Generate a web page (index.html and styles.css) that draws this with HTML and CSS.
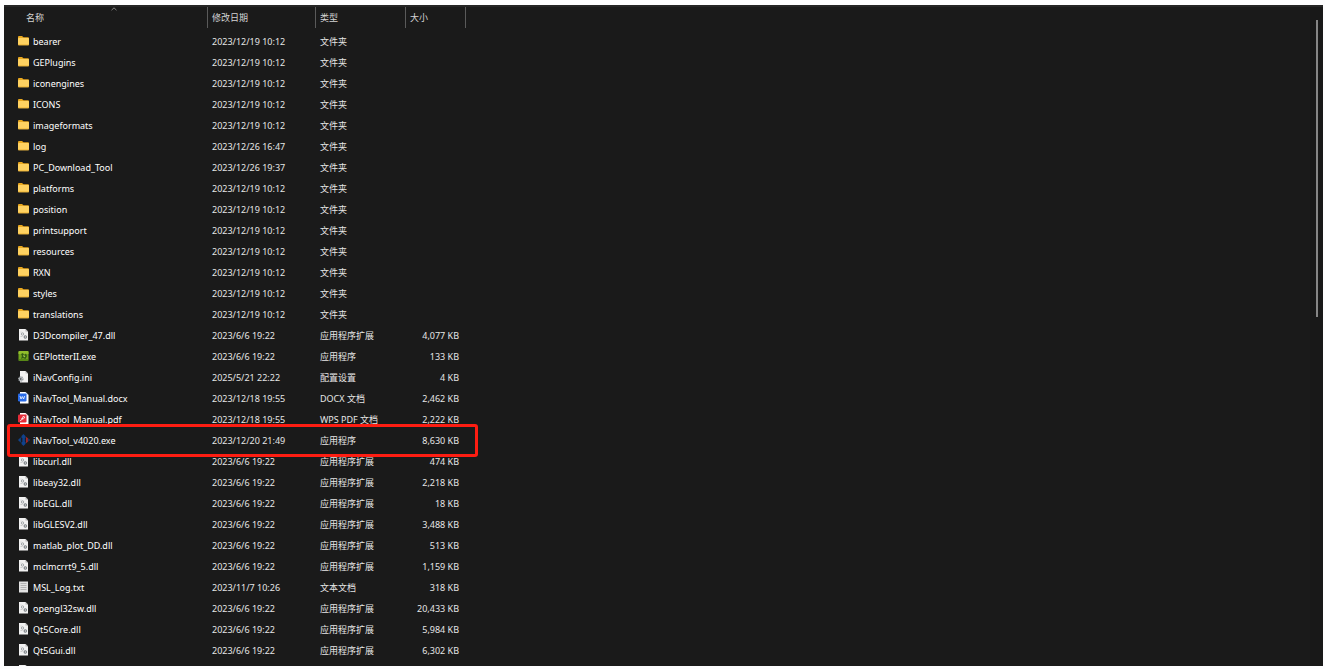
FILE: index.html
```html
<!DOCTYPE html>
<html lang="zh-CN">
<head>
    <meta charset="UTF-8">
    <meta name="viewport" content="width=device-width, initial-scale=1.0">
    <title>iNavTool</title>
    <link rel="stylesheet" href="styles.css">
</head>
<body>
    <!-- Icon shapes shared by the rows -->
    <svg class="sprite" aria-hidden="true">
        <symbol id="folder" viewBox="0 0 12 12">
            <path d="M0 2Q0 1 1 1H4L5.5 2.3H10Q11 2.3 11 3.3V5H0Z" fill="#e9a820"/>
            <rect x="0" y="3" width="11" height="7.3" rx=".8" fill="#ffd261"/>
            <path d="M0 9.4H11Q11 10.3 10 10.3H1Q0 10.3 0 9.4Z" fill="#eeb02f"/>
        </symbol>
        <symbol id="dll" viewBox="0 0 12 12">
            <path d="M1 0H7.5L10 2.5V11.5H1Z" fill="#f1f1f1"/>
            <path d="M7.5 0V2.5H10Z" fill="#b5b5b5"/>
            <circle cx="4.5" cy="5" r="1.2" fill="none" stroke="#9a9ea1" stroke-width=".9"/>
            <circle cx="7.3" cy="8" r="1.2" fill="none" stroke="#777c80" stroke-width="1.1"/>
            <path d="M2.5 7.5H4.5M2.5 3H3.5" stroke="#c4c4c4" stroke-width=".8"/>
        </symbol>
        <symbol id="plotter" viewBox="0 0 12 12">
            <rect x=".5" y="1" width="10" height="10" rx="1" fill="#73a51d"/>
            <path d="M.5 2Q.5 1 1.5 1H9.5Q10.5 1 10.5 2V4H.5Z" fill="#91bd2c"/>
            <path d="M3 4L5 3L6 5L8 3.5L9 6L7.5 9L5 8L3 9L4 6Z" fill="#335c16"/>
            <path d="M5 5L7.5 6L6 7.5Z" fill="#b9d852"/>
            <path d="M.5 10H10.5" stroke="#3f6a13" stroke-width="1"/>
        </symbol>
        <symbol id="ini" viewBox="0 0 12 12">
            <path d="M2 0H7.5L10 2.5V11.5H2Z" fill="#f2f2f2"/>
            <path d="M7.5 0V2.5H10Z" fill="#bcbcbc"/>
            <circle cx="2.8" cy="8" r="2" fill="#e0e0e0" stroke="#9a9fa3" stroke-width="1.6" stroke-dasharray="1.3 .5"/>
            <circle cx="2.8" cy="8" r=".9" fill="#555b60"/>
        </symbol>
        <symbol id="docx" viewBox="0 0 12 12">
            <path d="M2 0H7.5L10.5 3V11.5H2Z" fill="#fff"/>
            <path d="M7.5 0V3H10.5Z" fill="#bdd2fb"/>
            <rect x="0" y="1.5" width="8.5" height="8" rx="1.3" fill="#286be8"/>
            <path d="M2 4L3 7L4.3 4.5L5.6 7L6.6 4" fill="none" stroke="#fff" stroke-width=".8"/>
        </symbol>
        <symbol id="pdf" viewBox="0 0 12 12">
            <path d="M2 0H7.5L10.5 3V11.5H2Z" fill="#fff"/>
            <path d="M7.5 0V3H10.5Z" fill="#ffc7cb"/>
            <rect x="0" y="1.5" width="8.5" height="8" rx="1.3" fill="#e52c39"/>
            <path d="M2 7.8Q5 7 5 3.5Q7 3.2 6.5 5Q5.7 6.3 3 5.8" fill="none" stroke="#fff" stroke-width=".8"/>
        </symbol>
        <symbol id="inav" viewBox="0 0 12 12">
            <path d="M5.5 0L7.6 2.2V4L6.5 5L7.6 6L6.5 7L7.6 8V9.8L5.5 12L3.5 10V8L5 7L3.5 6L5 5L3.5 4V2Z" fill="#10428c"/>
            <path d="M2.8 3.2V8.8L0 6Z" fill="#10428c"/>
            <path d="M8.2 2.8L9.7 4.2V7.8L8.2 9.2Z" fill="#c02a2c"/>
            <path d="M10.3 4.3L12 6L10.3 7.7Z" fill="#10428c"/>
        </symbol>
        <symbol id="txt" viewBox="0 0 12 12">
            <path d="M1 .5H10V11.5H1Z" fill="#e2e2e2"/>
            <path d="M2.5 2.5H8.5M2.5 4.5H8.5M2.5 6.5H8.5M2.5 8.5H8.5" stroke="#a0a0a0" stroke-width=".7"/>
        </symbol>
    </svg>

    <main class="explorer">
        <div class="file-pane">
            <table class="files">
                <colgroup>
                    <col class="col-name">
                    <col class="col-date">
                    <col class="col-type">
                    <col class="col-size">
                </colgroup>
                <thead>
                    <tr>
                        <th class="sorted" aria-sort="ascending">名称<svg class="sort-arrow" viewBox="0 0 6 4" aria-hidden="true"><path d="M.5 3.2L3 .8L5.5 3.2" fill="none" stroke="#a0a0a0" stroke-width=".8"/></svg></th>
                        <th>修改日期</th>
                        <th>类型</th>
                        <th>大小</th>
                    </tr>
                </thead>
                <tbody>
                    <!-- Folders -->
                    <tr><td><svg class="icon"><use href="#folder"/></svg>bearer</td><td>2023/12/19 10:12</td><td>文件夹</td><td></td></tr>
                    <tr><td><svg class="icon"><use href="#folder"/></svg>GEPlugins</td><td>2023/12/19 10:12</td><td>文件夹</td><td></td></tr>
                    <tr><td><svg class="icon"><use href="#folder"/></svg>iconengines</td><td>2023/12/19 10:12</td><td>文件夹</td><td></td></tr>
                    <tr><td><svg class="icon"><use href="#folder"/></svg>ICONS</td><td>2023/12/19 10:12</td><td>文件夹</td><td></td></tr>
                    <tr><td><svg class="icon"><use href="#folder"/></svg>imageformats</td><td>2023/12/19 10:12</td><td>文件夹</td><td></td></tr>
                    <tr><td><svg class="icon"><use href="#folder"/></svg>log</td><td>2023/12/26 16:47</td><td>文件夹</td><td></td></tr>
                    <tr><td><svg class="icon"><use href="#folder"/></svg>PC_Download_Tool</td><td>2023/12/26 19:37</td><td>文件夹</td><td></td></tr>
                    <tr><td><svg class="icon"><use href="#folder"/></svg>platforms</td><td>2023/12/19 10:12</td><td>文件夹</td><td></td></tr>
                    <tr><td><svg class="icon"><use href="#folder"/></svg>position</td><td>2023/12/19 10:12</td><td>文件夹</td><td></td></tr>
                    <tr><td><svg class="icon"><use href="#folder"/></svg>printsupport</td><td>2023/12/19 10:12</td><td>文件夹</td><td></td></tr>
                    <tr><td><svg class="icon"><use href="#folder"/></svg>resources</td><td>2023/12/19 10:12</td><td>文件夹</td><td></td></tr>
                    <tr><td><svg class="icon"><use href="#folder"/></svg>RXN</td><td>2023/12/19 10:12</td><td>文件夹</td><td></td></tr>
                    <tr><td><svg class="icon"><use href="#folder"/></svg>styles</td><td>2023/12/19 10:12</td><td>文件夹</td><td></td></tr>
                    <tr><td><svg class="icon"><use href="#folder"/></svg>translations</td><td>2023/12/19 10:12</td><td>文件夹</td><td></td></tr>

                    <!-- Files -->
                    <tr><td><svg class="icon"><use href="#dll"/></svg>D3Dcompiler_47.dll</td><td>2023/6/6 19:22</td><td>应用程序扩展</td><td>4,077 KB</td></tr>
                    <tr><td><svg class="icon"><use href="#plotter"/></svg>GEPlotterII.exe</td><td>2023/6/6 19:22</td><td>应用程序</td><td>133 KB</td></tr>
                    <tr><td><svg class="icon"><use href="#ini"/></svg>iNavConfig.ini</td><td>2025/5/21 22:22</td><td>配置设置</td><td>4 KB</td></tr>
                    <tr><td><svg class="icon"><use href="#docx"/></svg>iNavTool_Manual.docx</td><td>2023/12/18 19:55</td><td>DOCX 文档</td><td>2,462 KB</td></tr>
                    <tr><td><svg class="icon"><use href="#pdf"/></svg>iNavTool_Manual.pdf</td><td>2023/12/18 19:55</td><td>WPS PDF 文档</td><td>2,222 KB</td></tr>
                    <tr class="marked"><td><svg class="icon"><use href="#inav"/></svg>iNavTool_v4020.exe</td><td>2023/12/20 21:49</td><td>应用程序</td><td>8,630 KB</td></tr>
                    <tr><td><svg class="icon"><use href="#dll"/></svg>libcurl.dll</td><td>2023/6/6 19:22</td><td>应用程序扩展</td><td>474 KB</td></tr>
                    <tr><td><svg class="icon"><use href="#dll"/></svg>libeay32.dll</td><td>2023/6/6 19:22</td><td>应用程序扩展</td><td>2,218 KB</td></tr>
                    <tr><td><svg class="icon"><use href="#dll"/></svg>libEGL.dll</td><td>2023/6/6 19:22</td><td>应用程序扩展</td><td>18 KB</td></tr>
                    <tr><td><svg class="icon"><use href="#dll"/></svg>libGLESV2.dll</td><td>2023/6/6 19:22</td><td>应用程序扩展</td><td>3,488 KB</td></tr>
                    <tr><td><svg class="icon"><use href="#dll"/></svg>matlab_plot_DD.dll</td><td>2023/6/6 19:22</td><td>应用程序扩展</td><td>513 KB</td></tr>
                    <tr><td><svg class="icon"><use href="#dll"/></svg>mclmcrrt9_5.dll</td><td>2023/6/6 19:22</td><td>应用程序扩展</td><td>1,159 KB</td></tr>
                    <tr><td><svg class="icon"><use href="#txt"/></svg>MSL_Log.txt</td><td>2023/11/7 10:26</td><td>文本文档</td><td>318 KB</td></tr>
                    <tr><td><svg class="icon"><use href="#dll"/></svg>opengl32sw.dll</td><td>2023/6/6 19:22</td><td>应用程序扩展</td><td>20,433 KB</td></tr>
                    <tr><td><svg class="icon"><use href="#dll"/></svg>Qt5Core.dll</td><td>2023/6/6 19:22</td><td>应用程序扩展</td><td>5,984 KB</td></tr>
                    <tr><td><svg class="icon"><use href="#dll"/></svg>Qt5Gui.dll</td><td>2023/6/6 19:22</td><td>应用程序扩展</td><td>6,302 KB</td></tr>
                    <tr><td><svg class="icon"><use href="#dll"/></svg></td><td></td><td></td><td></td></tr>
                </tbody>
            </table>
        </div>
        <div class="scrollbar"><div class="thumb"></div></div>
    </main>
</body>
</html>
```

FILE: styles.css
```css
* {
    box-sizing: border-box;
}

body {
    margin: 0;
    padding: 5px 2px 3px 4px;
    height: 100vh;
    background-color: #fdfdfe;
    color: #e6e6e6;
    font-family: "Noto Sans", "Noto Sans CJK SC", sans-serif;
    font-size: 9px;
    line-height: 14px;
}

.sprite {
    display: none;
}

.explorer {
    display: flex;
    height: 100%;
    background-color: #1a1a1a;
    border-top: 2px solid #252525;
    overflow: hidden;
}

.file-pane {
    flex: 1;
    min-width: 0;
    overflow: hidden;
}

/* File list */
.files {
    width: 462px;
    table-layout: fixed;
    border-spacing: 0;
    white-space: nowrap;
}

.col-name {
    width: 204px;
}

.col-date {
    width: 108px;
}

.col-type {
    width: 90px;
}

.col-size {
    width: 60px;
}

th {
    height: 21px;
    padding: 0 4px;
    border-right: 1px solid #5a5a5a;
    color: #d4d4d4;
    font-weight: normal;
    text-align: left;
}

th.sorted {
    position: relative;
    padding-left: 22px;
}

.sort-arrow {
    position: absolute;
    top: 0;
    left: 107px;
    width: 6px;
    height: 4px;
}

/* Space between the header and the first row */
tbody::before {
    content: '';
    display: block;
    height: 3px;
}

td {
    height: 21px;
    padding: 0 4px;
}

td:first-child {
    padding-left: 14px;
    color: #fff;
}

td:last-child {
    padding-right: 7px;
    text-align: right;
}

.icon {
    width: 12px;
    height: 12px;
    margin-right: 3px;
    vertical-align: top;
}

/* Red frame around the program to start */
.marked {
    position: relative;
}

.marked::after {
    content: '';
    position: absolute;
    top: -6px;
    right: -12px;
    bottom: -6px;
    left: 3px;
    border: 3px solid #fd1d12;
    border-radius: 3px;
}

/* Scrollbar */
.scrollbar {
    display: flex;
    justify-content: center;
    width: 13px;
    padding-top: 13px;
    background-color: #181818;
}

.thumb {
    width: 2px;
    height: 46%;
    background-color: #858585;
}
```
